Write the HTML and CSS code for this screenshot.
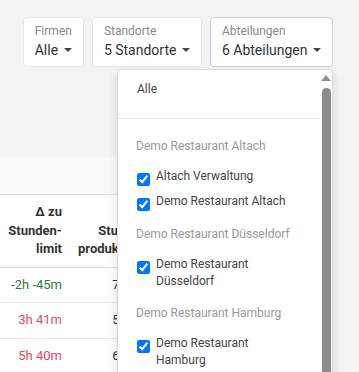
FILE: index.html
```html
<!DOCTYPE html>
<html lang="de">
<head>
<meta charset="utf-8">
<title>Filter</title>
<link rel="stylesheet" href="styles.css">
</head>
<body>
<div class="page">
  <div class="toolbar">
    <div class="filter">
      <div class="fbtn">
        <span class="flabel">Firmen</span>
        <span class="fvalue">Alle <span class="caret"></span></span>
      </div>
    </div>
    <div class="filter">
      <div class="fbtn">
        <span class="flabel">Standorte</span>
        <span class="fvalue">5 Standorte <span class="caret"></span></span>
      </div>
    </div>
    <div class="filter">
      <div class="fbtn active">
        <span class="flabel">Abteilungen</span>
        <span class="fvalue">6 Abteilungen <span class="caret"></span></span>
      </div>
      <div class="dd">
        <div class="dd-list">
          <div class="dd-item">Alle</div>
          <div class="dd-divider"></div>
          <div class="dd-header">Demo Restaurant Altach</div>
          <label class="dd-check"><input type="checkbox" checked><span>Altach Verwaltung</span></label>
          <label class="dd-check"><input type="checkbox" checked><span>Demo Restaurant Altach</span></label>
          <div class="dd-header">Demo Restaurant Düsseldorf</div>
          <label class="dd-check"><input type="checkbox" checked><span>Demo Restaurant Düsseldorf</span></label>
          <div class="dd-header">Demo Restaurant Hamburg</div>
          <label class="dd-check"><input type="checkbox" checked><span>Demo Restaurant Hamburg</span></label>
          <div class="dd-header">Demo Restaurant München</div>
          <label class="dd-check"><input type="checkbox" checked><span>Demo Restaurant München</span></label>
        </div>
        <div class="dd-scroll"><span class="sb-arrow"></span><span class="sb-thumb"></span></div>
      </div>
    </div>
  </div>

  <div class="table-wrap">
    <div class="band"></div>
    <table class="data">
      <colgroup><col class="c1"><col class="c2"><col class="c3"></colgroup>
      <thead>
        <tr><th>Δ zu Stunden-limit</th><th>Stunden-produktivität</th><th>Umsatz</th></tr>
      </thead>
      <tbody>
        <tr><td class="pos">-2h -45m</td><td class="v2">7h 12m</td><td>1.240 €</td></tr>
        <tr><td class="neg">3h 41m</td><td class="v2">5h 58m</td><td>980 €</td></tr>
        <tr><td class="neg">5h 40m</td><td class="v2">6h 04m</td><td>1.105 €</td></tr>
      </tbody>
    </table>
  </div>
</div>
</body>
</html>
```
FILE: styles.css
```css
html {
  overflow: hidden;
}
body {
  margin: 0;
  background: #f3f4f6;
  font-family: Roboto, "Liberation Sans", sans-serif;
  color: #333;
}
.page {
  width: 359px;
}
.toolbar {
  display: flex;
  justify-content: flex-end;
  gap: 8px;
  padding: 17px 26px 0;
}
.filter {
  position: relative;
}
.fbtn {
  display: flex;
  flex-direction: column;
  align-items: flex-start;
  padding: 5px 11px 6px;
  background: #fff;
  border: 1px solid #e9eaec;
  border-radius: 4px;
  white-space: nowrap;
}
.fbtn.active {
  border-color: #cfd0d2;
}
.flabel {
  font-size: 12px;
  line-height: 17px;
  color: #8a8a8a;
}
.fvalue {
  font-size: 14px;
  line-height: 20px;
  color: #333;
}
.caret {
  display: inline-block;
  width: 0;
  height: 0;
  margin-left: 2px;
  border-top: 4px solid #444;
  border-left: 4px solid transparent;
  border-right: 4px solid transparent;
  vertical-align: 3px;
}

/* dropdown */
.dd {
  position: absolute;
  top: calc(100% + 2px);
  right: 0;
  width: 214px;
  display: flex;
  background: #fff;
  border: 1px solid #dcdcdc;
  border-radius: 4px;
  box-shadow: 0 4px 10px rgba(0, 0, 0, 0.14);
  z-index: 5;
}
.dd-list {
  flex: 1;
  padding-top: 5px;
  font-size: 12px;
  line-height: 17px;
}
.dd-item {
  padding: 6px 24px 6px 19px;
  color: #444;
}
.dd-divider {
  height: 1px;
  margin: 14px 0 7px;
  background: #e6e6e6;
}
.dd-header {
  padding: 12px 24px 9px 18px;
  color: #999;
}
.dd-check {
  display: flex;
  align-items: flex-start;
  gap: 6px;
  padding: 4px 24px 3px 19px;
  color: #444;
}
.dd-check input {
  width: 13px;
  height: 13px;
  margin: 5px 0 0;
  flex: none;
}
.dd-scroll {
  width: 12px;
  display: flex;
  flex-direction: column;
  align-items: center;
  padding-top: 5px;
}
.sb-arrow {
  width: 0;
  height: 0;
  border-bottom: 6px solid #8f8f8f;
  border-left: 5px solid transparent;
  border-right: 5px solid transparent;
}
.sb-thumb {
  flex: 1;
  width: 9px;
  margin-top: 7px;
  background: #8c8c8c;
  border-radius: 5px;
}

/* table */
.table-wrap {
  margin-top: 90px;
  width: 330px;
}
.band {
  height: 37px;
  background: #f8f9fa;
  border-bottom: 1px solid #dddee0;
}
.data {
  width: 330px;
  table-layout: fixed;
  border-collapse: collapse;
  background: #fff;
  font-size: 13px;
  line-height: 1.42857;
}
.c1 { width: 70px; }
.c2 { width: 90px; }
.data th {
  padding: 8px;
  text-align: right;
  vertical-align: bottom;
  font-weight: 700;
  border-bottom: 1px solid #dddee0;
}
.data td {
  padding: 8px;
  text-align: right;
  border-bottom: 1px solid #e7e7e9;
  white-space: nowrap;
}
.data td.v2 { padding-right: 4px; }
.data td.pos { color: #2f7a3a; }
.data td.neg { color: #e8475c; }
```
